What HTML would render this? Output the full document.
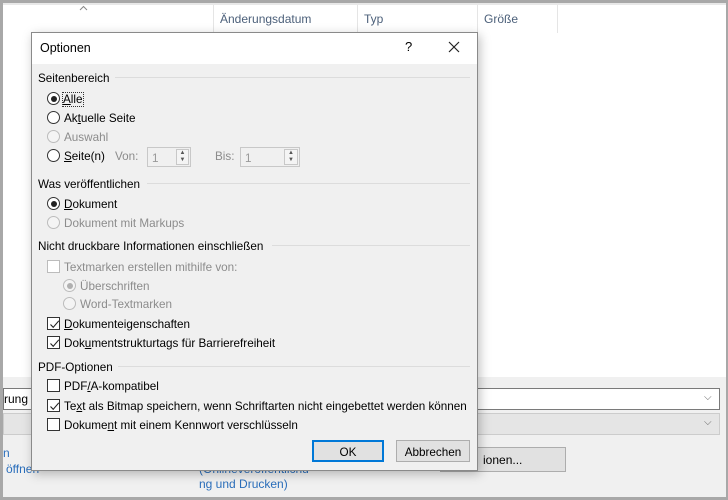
<!DOCTYPE html>
<html><head><meta charset="utf-8"><style>
*{margin:0;padding:0;box-sizing:border-box}
body{width:728px;height:500px;overflow:hidden;background:#fff;font-family:"Liberation Sans",sans-serif;font-size:11.7px;color:#000;position:relative}
.a{position:absolute;white-space:nowrap}
.t{margin-top:2px}
.g{color:#8c8c8c}
.rb{position:absolute;width:13px;height:13px;border:1px solid #333;border-radius:50%;background:#fff}
.rb.on::after{content:"";position:absolute;left:2.5px;top:2.5px;width:6px;height:6px;border-radius:50%;background:#222}
.rb.dis{border-color:#bcbcbc;background:#f4f4f4}
.rb.dis.on::after{background:#b0b0b0}
.cb{position:absolute;width:13px;height:13px;border:1px solid #333;background:#fff}
.cb.dis{border-color:#bcbcbc}
.cb svg{position:absolute;left:1px;top:1px}
.sec{position:absolute;height:1px;background:#dcdcdc}
u{text-decoration:underline}
</style></head><body>
<div class="a" style="left:0;top:0;width:728px;height:500px;border:3px solid #a8a8a8;border-right-width:2px;border-bottom-width:3px"></div>
<div class="a" style="left:3px;top:3px;width:723px;height:2px;background:#e8e8e8"></div>
<svg class="a" style="left:79px;top:5px" width="9" height="6"><path d="M1 5L4.5 1.5L8 5" fill="none" stroke="#888" stroke-width="1"/></svg>
<div class="a" style="left:213px;top:5px;width:1px;height:28px;background:#e5e5e5"></div>
<div class="a" style="left:357px;top:5px;width:1px;height:28px;background:#e5e5e5"></div>
<div class="a" style="left:477px;top:5px;width:1px;height:28px;background:#e5e5e5"></div>
<div class="a" style="left:557px;top:5px;width:1px;height:28px;background:#e5e5e5"></div>
<div class="a" style="left:220px;top:12px;color:#4c607a;font-size:12px">Änderungsdatum</div>
<div class="a" style="left:364px;top:12px;color:#4c607a;font-size:12px">Typ</div>
<div class="a" style="left:484px;top:12px;color:#4c607a;font-size:12px">Größe</div>
<div class="a" style="left:3px;top:377px;width:723px;height:120px;background:#f0f0f0"></div>
<div class="a" style="left:3px;top:388px;width:717px;height:22px;background:#fff;border:1px solid #7a7a7a;padding:3px 0 0 0;font-size:12px">rung v</div>
<div class="a" style="left:704px;top:392px;color:#666;font-size:10px">&#x2335;</div>
<div class="a" style="left:3px;top:413px;width:717px;height:22px;background:#e5e5e5;border:1px solid #cccccc"></div>
<div class="a" style="left:704px;top:417px;color:#666;font-size:10px">&#x2335;</div>
<div class="a" style="left:440px;top:447px;width:126px;height:25px;background:#e1e1e1;border:1px solid #adadad;padding:5px 0 0 42px;font-size:12px">ionen...</div>
<div class="a" style="left:3px;top:446px;color:#2a6ebb;font-size:12px">n</div>
<div class="a" style="left:6px;top:462px;color:#2a6ebb;font-size:12px">öffnen</div>
<div class="a" style="left:199px;top:462px;color:#2a6ebb;font-size:12px">(Onlineveröffentlichu</div>
<div class="a" style="left:199px;top:477px;color:#2a6ebb;font-size:12px">ng und Drucken)</div>

<div class="a" style="left:31px;top:32px;width:447px;height:439px;background:#f0f0f0;border:1px solid #8a8a8a;box-shadow:2px 3px 10px rgba(0,0,0,.25)"></div>
<div class="a" style="left:32px;top:33px;width:445px;height:31px;background:#fff"></div>
<div class="a" style="left:40px;top:41px;font-size:12.5px">Optionen</div>
<div class="a" style="left:405px;top:39px;font-size:13px">?</div>
<svg class="a" style="left:448px;top:41px" width="12" height="12"><path d="M1 1L11 11M11 1L1 11" stroke="#222" stroke-width="1.2"/></svg>

<div class="a t" style="left:38px;top:70px">Seitenbereich</div><div class="sec" style="left:115px;top:77px;width:355px"></div>
<div class="rb on" style="left:47px;top:92px"></div><div class="a t" style="left:63px;top:91px;outline:1px dotted #333"><u>A</u>lle</div>
<div class="rb" style="left:47px;top:111px"></div><div class="a t" style="left:64px;top:110px">Ak<u>t</u>uelle Seite</div>
<div class="rb dis" style="left:47px;top:130px"></div><div class="a t g" style="left:64px;top:129px">Auswahl</div>
<div class="rb" style="left:47px;top:149px"></div><div class="a t" style="left:64px;top:148px"><u>S</u>eite(n)</div>
<div class="a t g" style="left:115px;top:148px">Von:</div>
<div class="a" style="left:147px;top:147px;width:44px;height:20px;border:1px solid #c8c8c8;background:#f0f0f0;color:#999;padding:4px 0 0 4px">1</div>
<div class="a" style="left:176px;top:149px;width:13px;height:16px;border:1px solid #c8c8c8;background:#f4f4f4;font-size:6px;color:#555;line-height:7px;text-align:center">▲<br>▼</div>
<div class="a t g" style="left:215px;top:148px">Bis:</div>
<div class="a" style="left:240px;top:147px;width:60px;height:20px;border:1px solid #c8c8c8;background:#f0f0f0;color:#999;padding:4px 0 0 4px">1</div>
<div class="a" style="left:284px;top:149px;width:14px;height:16px;border:1px solid #c8c8c8;background:#f4f4f4;font-size:6px;color:#555;line-height:7px;text-align:center">▲<br>▼</div>

<div class="a t" style="left:38px;top:176px">Was veröffentlichen</div><div class="sec" style="left:147px;top:183px;width:323px"></div>
<div class="rb on" style="left:47px;top:197px"></div><div class="a t" style="left:64px;top:196px"><u>D</u>okument</div>
<div class="rb dis" style="left:47px;top:216px"></div><div class="a t g" style="left:64px;top:215px">Dokument mit Markups</div>

<div class="a t" style="left:38px;top:238px">Nicht druckbare Informationen einschließen</div><div class="sec" style="left:272px;top:245px;width:198px"></div>
<div class="cb dis" style="left:47px;top:260px"></div><div class="a t g" style="left:64px;top:259px">Textmarken erstellen mithilfe von:</div>
<div class="rb dis on" style="left:63px;top:279px"></div><div class="a t g" style="left:80px;top:278px">Überschriften</div>
<div class="rb dis" style="left:63px;top:297px"></div><div class="a t g" style="left:80px;top:296px">Word-Textmarken</div>
<div class="cb" style="left:47px;top:317px"><svg width="11" height="11"><path d="M1.5 5.5L4.2 8.3L9.8 1.8" fill="none" stroke="#222" stroke-width="1.1"/></svg></div><div class="a t" style="left:64px;top:316px"><u>D</u>okumenteigenschaften</div>
<div class="cb" style="left:47px;top:336px"><svg width="11" height="11"><path d="M1.5 5.5L4.2 8.3L9.8 1.8" fill="none" stroke="#222" stroke-width="1.1"/></svg></div><div class="a t" style="left:64px;top:335px">Dok<u>u</u>mentstrukturtags für Barrierefreiheit</div>

<div class="a t" style="left:38px;top:359px">PDF-Optionen</div><div class="sec" style="left:118px;top:366px;width:352px"></div>
<div class="cb" style="left:47px;top:379px"></div><div class="a t" style="left:64px;top:378px">PDF<u>/</u>A-kompatibel</div>
<div class="cb" style="left:47px;top:399px"><svg width="11" height="11"><path d="M1.5 5.5L4.2 8.3L9.8 1.8" fill="none" stroke="#222" stroke-width="1.1"/></svg></div><div class="a t" style="left:64px;top:398px">Te<u>x</u>t als Bitmap speichern, wenn Schriftarten nicht eingebettet werden können</div>
<div class="cb" style="left:47px;top:418px"></div><div class="a t" style="left:64px;top:417px">Dokume<u>n</u>t mit einem Kennwort verschlüsseln</div>

<div class="a" style="left:312px;top:440px;width:72px;height:22px;background:#e1e1e1;border:2px solid #0078d7;text-align:center;padding-top:4px">OK</div>
<div class="a" style="left:396px;top:440px;width:74px;height:22px;background:#e1e1e1;border:1px solid #adadad;text-align:center;padding-top:5px">Abbrechen</div>
</body></html>
